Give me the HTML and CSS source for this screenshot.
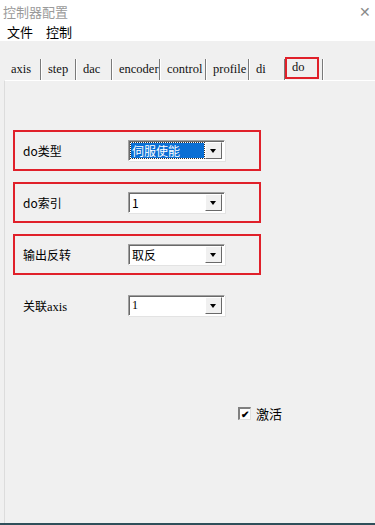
FILE: index.html
```html
<!DOCTYPE html>
<html lang="zh">
<head>
    <meta charset="UTF-8" />
    <title>控制器配置</title>
    <link rel="stylesheet" href="styles.css">
</head>
<body>
<div class="window">
    <div class="titlebar">
        <span class="title">控制器配置</span>
        <span class="close">✕</span>
    </div>
    <div class="menubar">
        <span class="menu-item">文件</span>
        <span class="menu-item">控制</span>
    </div>
    <div class="main">
        <div class="tabs">
            <div class="tab w-axis">axis</div>
            <div class="tab w-step">step</div>
            <div class="tab w-dac">dac</div>
            <div class="tab w-encoder">encoder</div>
            <div class="tab w-control">control</div>
            <div class="tab w-profile">profile</div>
            <div class="tab w-di">di</div>
            <div class="tab w-do active"><span class="active-box">do</span></div>
        </div>
        <div class="panel">
            <div class="row boxed">
                <span class="label">do类型</span>
                <div class="select"><span class="value selected">伺服使能</span><span class="arrow"></span></div>
            </div>
            <div class="row boxed">
                <span class="label">do索引</span>
                <div class="select"><span class="value">1</span><span class="arrow"></span></div>
            </div>
            <div class="row boxed">
                <span class="label">输出反转</span>
                <div class="select"><span class="value">取反</span><span class="arrow"></span></div>
            </div>
            <div class="row plain">
                <span class="label">关联<span class="latin">axis</span></span>
                <div class="select"><span class="value latin">1</span><span class="arrow"></span></div>
            </div>
            <div class="check-row">
                <span class="checkbox">✔</span>
                <span class="check-label">激活</span>
            </div>
        </div>
    </div>
</div>
</body>
</html>
```

FILE: styles.css
```css
* {
    box-sizing: border-box;
    margin: 0;
    padding: 0;
}
body {
    font-family: "Noto Sans CJK SC", "Noto Sans", sans-serif;
    font-size: 12px;
    color: #000;
    background: #f0f0f0;
    width: 375px;
    height: 525px;
    overflow: hidden;
}
.window {
    display: flex;
    flex-direction: column;
    height: 525px;
    border-bottom: 2px solid #2f4f5a;
}
.titlebar {
    height: 22px;
    background: #fff;
    display: flex;
    align-items: center;
    justify-content: space-between;
    padding: 0 4px 0 3px;
}
.title {
    color: #9a9a9a;
    font-size: 13px;
}
.close {
    color: #8a8a8a;
    font-size: 14px;
    font-weight: 300;
}
.menubar {
    height: 19px;
    background: #fff;
    display: flex;
    align-items: center;
    padding-left: 7px;
    gap: 13px;
}
.menu-item {
    font-size: 13px;
}
.main {
    flex: 1;
    padding-top: 18px;
    padding-left: 4px;
    display: flex;
    flex-direction: column;
}
.tabs {
    display: flex;
    height: 21px;
}
.tab {
    font-family: "Liberation Serif", "DejaVu Serif", serif;
    font-size: 12.5px;
    padding: 3px 0 0 7px;
    border-right: 1px solid #7a7a7a;
    box-shadow: 1px 0 0 #fff;
    color: #111;
}
.w-axis { width: 37px; }
.w-step { width: 35px; }
.w-dac { width: 36px; }
.w-encoder { width: 48px; }
.w-control { width: 46px; }
.w-profile { width: 43px; }
.w-di { width: 36px; }
.w-do { width: 38px; padding: 0 0 0 0; }
.active-box {
    display: block;
    width: 34px;
    height: 22px;
    margin-top: -2px;
    border: 2px solid #e0202a;
    padding: 1px 0 0 5px;
}
.panel {
    flex: 1;
    border-left: 1px solid #dcdcdc;
    border-top: 1px solid #fff;
    padding: 49px 0 0 8px;
    display: flex;
    flex-direction: column;
}
.row {
    width: 248px;
    height: 41px;
    display: flex;
    align-items: center;
    padding-left: 8px;
}
.boxed {
    border: 2px solid #e0202a;
    margin-bottom: 11px;
}
.plain {
    padding-left: 10px;
    margin-top: -1px;
}
.label {
    width: 105px;
    font-size: 12px;
}
.latin {
    font-family: "Liberation Serif", serif;
    font-size: 12.5px;
}
.select {
    width: 97px;
    height: 21px;
    background: #fff;
    border-top: 1px solid #a0a0a0;
    border-left: 1px solid #a0a0a0;
    border-right: 1px solid #fff;
    border-bottom: 1px solid #fff;
    box-shadow: inset 1px 1px 0 #696969, 1px 1px 0 #e3e3e3;
    display: flex;
    align-items: center;
    padding: 2px;
}
.value {
    flex: 1;
    height: 15px;
    line-height: 15px;
    padding-left: 1px;
    font-size: 12px;
}
.value.selected {
    background: #0a6fd4;
    color: #fff;
    outline: 1px dotted #333;
    margin-right: 1px;
}
.arrow {
    width: 17px;
    height: 17px;
    background: #f0f0f0;
    border-right: 1px solid #696969;
    border-bottom: 1px solid #696969;
    border-top: 1px solid #fff;
    border-left: 1px solid #fff;
    position: relative;
}
.arrow::after {
    content: "";
    position: absolute;
    left: 4px;
    top: 6px;
    border-left: 3.5px solid transparent;
    border-right: 3.5px solid transparent;
    border-top: 4px solid #000;
}
.check-row {
    display: flex;
    align-items: center;
    gap: 5px;
    margin-top: 78px;
    margin-left: 225px;
}
.checkbox {
    width: 13px;
    height: 13px;
    background: #fff;
    border-top: 2px solid #808080;
    border-left: 2px solid #808080;
    border-right: 1px solid #e0e0e0;
    border-bottom: 1px solid #e0e0e0;
    font-size: 10px;
    line-height: 10px;
    text-align: center;
    font-weight: bold;
}
.check-label {
    font-size: 13px;
}
```
